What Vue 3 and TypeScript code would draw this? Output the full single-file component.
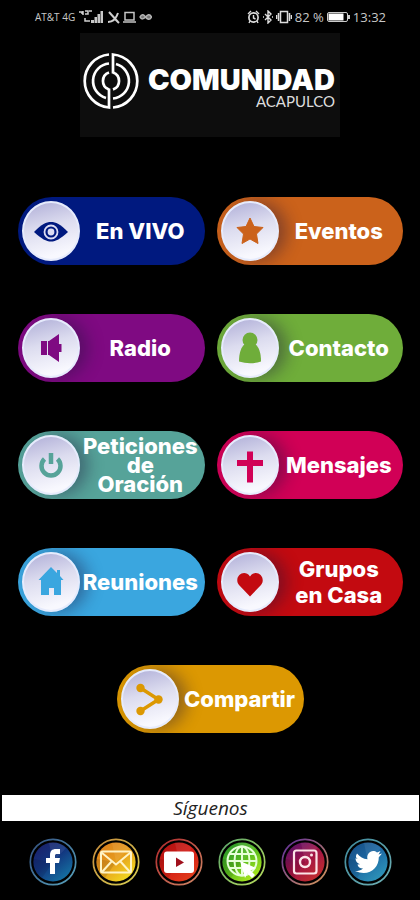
<script setup lang="ts">
interface MenuItem {
  id: string
  lines: string[]
  loose?: boolean
}

const items: MenuItem[] = [
  { id: 'vivo', lines: ['En VIVO'] },
  { id: 'eventos', lines: ['Eventos'] },
  { id: 'radio', lines: ['Radio'] },
  { id: 'contacto', lines: ['Contacto'] },
  { id: 'peticiones', lines: ['Peticiones', 'de', 'Oración'] },
  { id: 'mensajes', lines: ['Mensajes'] },
  { id: 'reuniones', lines: ['Reuniones'] },
  { id: 'grupos', lines: ['Grupos', 'en Casa'], loose: true },
  { id: 'compartir', lines: ['Compartir'] },
]

interface Social {
  id: string
  label: string
  ring: [string, string]
  fill: [string, string, string]
}

const socials: Social[] = [
  { id: 'facebook', label: 'Facebook', ring: ['#34507f', '#58a3bd'], fill: ['#1c1c66', '#12357f', '#1576a4'] },
  { id: 'correo', label: 'Correo', ring: ['#c58a3c', '#d8cf52'], fill: ['#d9791a', '#e69a1c', '#f2df22'] },
  { id: 'youtube', label: 'YouTube', ring: ['#b0262a', '#d08a68'], fill: ['#a81212', '#d31a14', '#e2401c'] },
  { id: 'web', label: 'Sitio web', ring: ['#5aa56c', '#b9dc5c'], fill: ['#1f8d2c', '#53b81e', '#b4ee1c'] },
  { id: 'instagram', label: 'Instagram', ring: ['#5a2a9c', '#d99a58'], fill: ['#4a1273', '#a01146', '#c4302c'] },
  { id: 'twitter', label: 'Twitter', ring: ['#3f8a9c', '#6fb0b4'], fill: ['#174a80', '#1c68a4', '#2f98ba'] },
]
</script>

<template>
  <div class="page">
    <header class="status">
      <div class="status-group">
        <span class="carrier">AT&amp;T 4G</span>
        <svg class="signal" viewBox="0 0 26 14" aria-hidden="true">
          <path d="M1 2h3v2M5 1v4M7 1h3v3H7M11 1h3M7 8v3h5" fill="none" stroke="#d0d0d0" stroke-width="1.5" />
          <path d="M13 10h3v3h-3zM16.500 7h2.500v6h-2.500zM19.500 4h2.500v9h-2.500zM22.500 1h2.500v12h-2.500z" fill="#c8c8c8" />
        </svg>
        <svg class="icon" viewBox="0 0 13 14" aria-hidden="true">
          <path d="M1 12c4 0 8-3 10-9M2 2l9 10M8 9l4 4" fill="none" stroke="#d0d0d0" stroke-width="2" />
        </svg>
        <svg class="icon" viewBox="0 0 13 14" aria-hidden="true">
          <path d="M2 2.500h9v7.500h-9zM0 12h13" fill="none" stroke="#c4c4c4" stroke-width="1.5" />
        </svg>
        <svg class="icon" viewBox="0 0 13 14" aria-hidden="true">
          <path d="M1 7c2-4 4-2 5.500 0s4 4 6 0c-2-4-4-2-6 0s-4 3-5.500 0z" fill="#777" stroke="#b4b4b4" stroke-width="1.500" />
        </svg>
      </div>
      <div class="status-group">
        <svg class="icon" viewBox="0 0 13 14" aria-hidden="true">
          <circle cx="6.500" cy="7.500" r="4.600" fill="none" stroke="#ddd" stroke-width="1.700" />
          <path d="M1 4l3-3M12 4L9 1M6.500 5v3l2 1M3 11l-1 2M10 11l1 2" fill="none" stroke="#ddd" stroke-width="1.400" />
        </svg>
        <svg class="bluetooth" viewBox="0 0 10 14" aria-hidden="true">
          <path d="M2 4l6 6-3 3V1l3 3-6 6M0 7h1M9 7h1" fill="none" stroke="#ddd" stroke-width="1.400" />
        </svg>
        <svg class="vibrate" viewBox="0 0 16 14" aria-hidden="true">
          <path d="M4.500 1.500h7v11h-7zM2.500 3v8M13.500 3v8M.5 5v4M15.500 5v4" fill="none" stroke="#ddd" stroke-width="1.500" />
        </svg>
        <span class="clock">82 %</span>
        <svg class="battery" viewBox="0 0 23 12" aria-hidden="true">
          <rect x=".5" y="1.500" width="20" height="9" rx="1.500" fill="none" stroke="#ccc" />
          <path d="M1.500 2.500h15v7h-15z" fill="#fff" />
          <path d="M21 4h2v4h-2z" fill="#ccc" />
        </svg>
        <span class="clock">13:32</span>
      </div>
    </header>

    <div class="brand">
      <svg class="brand-mark" viewBox="-29 -29 58 58" aria-hidden="true">
        <g fill="none" stroke="#fff" stroke-width="2.700">
          <path d="M-2-26.500A26.600 26.600 0 0 0-2 26.500V7.500" />
          <path d="M2 26.500A26.600 26.600 0 0 0 2-26.500V-7.500" />
          <path d="M-2-17.500A17.600 17.600 0 0 0-5 17" />
          <path d="M5-17A17.600 17.600 0 0 1 2 17.500" />
          <path d="M-2-8.500A9 9 0 0 0-2 8.500" />
          <path d="M2 8.500A9 9 0 0 0 2-8.500" />
        </g>
      </svg>
      <div class="brand-text">
        <h1 class="brand-name">COMUNIDAD</h1>
        <span class="brand-place">ACAPULCO</span>
      </div>
    </div>

    <nav class="menu">
      <button v-for="item in items" :key="item.id" type="button" class="pill" :class="item.id">
        <span class="knob">
          <svg class="knob-icon" viewBox="-27 -28 54 56" aria-hidden="true">
            <template v-if="item.id === 'vivo'">
              <path d="M-17 1C-9-7-5-9 0-9S9-7 17 1C9 8 5 10.500 0 10.500S-9 8-17 1z" />
              <circle cy="1" r="6.500" fill="none" stroke="#dcdcf2" stroke-width="1.800" />
              <circle cy="1" r="3.400" fill="#dcdcf2" />
            </template>
            <path v-else-if="item.id === 'eventos'" stroke-width="1" stroke="currentColor" stroke-linejoin="round" d="M0-13L4-4.500 13-3.500 6.500 3 8 12.500 0 8-8 12.500-6.500 3-13-3.500-4-4.500z" />
            <template v-else-if="item.id === 'radio'">
              <path d="M-10-7h6V7h-6zM-3-7h1L8-14V14L-2 7h-1z" />
              <path d="M8-4h2.500V4H8z" />
            </template>
            <template v-else-if="item.id === 'contacto'">
              <circle cy="-8" r="7.500" />
              <path d="M-5-4C-9-1-11 5-11 13.500Q0 17 11 13.500C11 5 9-1 5-4z" />
            </template>
            <path v-else-if="item.id === 'peticiones'" d="M-6.500-6A9.500 9.500 0 1 0 6.500-6M0-12V-1" fill="none" stroke="currentColor" stroke-width="4.500" />
            <path v-else-if="item.id === 'mensajes'" d="M-3-13.500h6v8.500h10V1H3v16.500h-6V1h-10v-6h10z" />
            <path v-else-if="item.id === 'reuniones'" d="M0-15L6-9v-3h3v6l3.500 4H10v15H3V6h-5v7h-8V-2h-2.500z" />
            <path v-else-if="item.id === 'grupos'" d="M0 14.500L-11 3C-17-5-6-14 0-5.500 6-14 17-5 11 3z" />
            <template v-else>
              <path d="M-9.500-11L8.500 .5-9.500 12" fill="none" stroke="currentColor" stroke-width="3.500" />
              <circle cx="-9.500" cy="-11" r="4.200" />
              <circle cx="8.500" cy=".5" r="4.200" />
              <circle cx="-9.500" cy="12" r="4.200" />
            </template>
          </svg>
        </span>
        <span class="label" :class="{ loose: item.loose }">
          <span v-for="line in item.lines" :key="line">{{ line }}</span>
        </span>
      </button>
    </nav>

    <footer class="footer">
      <h2 class="follow">Síguenos</h2>
      <div class="socials">
        <a v-for="s in socials" :key="s.id" class="social" href="#" :aria-label="s.label">
          <svg viewBox="-24 -24 48 48" aria-hidden="true">
            <defs>
              <linearGradient :id="'ring-' + s.id" x1="0" y1="0" x2="1" y2="1">
                <stop offset="0" :stop-color="s.ring[0]" />
                <stop offset="1" :stop-color="s.ring[1]" />
              </linearGradient>
              <linearGradient :id="'fill-' + s.id" x1="0" y1="0" x2=".8" y2="1">
                <stop offset="0" :stop-color="s.fill[0]" />
                <stop offset=".5" :stop-color="s.fill[1]" />
                <stop offset="1" :stop-color="s.fill[2]" />
              </linearGradient>
            </defs>
            <circle r="22.700" fill="#000" :stroke="`url(#ring-${s.id})`" stroke-width="1.700" />
            <circle r="19.600" :fill="`url(#fill-${s.id})`" />
            <path d="M0 0L-4-19A19.500 19.500 0 0 1 13-14z" fill="#fff" opacity=".08" />
            <path d="M0 0L-19-3A19.500 19.500 0 0 0-11 16z" fill="#000" opacity=".1" />
            <path v-if="s.id === 'facebook'" fill="#fff" d="M-3 12V1h-4v-5h4v-3c0-4 2-6 6-6h4v5H4C2.500-8 2-7.500 2-6v2h5L6 1H2v11z" />
            <g v-else-if="s.id === 'correo'" fill="none" stroke="#fff3c4" stroke-width="2">
              <rect x="-15" y="-10.500" width="30" height="21" rx="1.500" />
              <path d="M-14.500-9.500L0 2.500 14.500-9.500M-14 10L-4-1M14 10L4-1" />
            </g>
            <template v-else-if="s.id === 'youtube'">
              <rect x="-15" y="-10.500" width="30" height="21.500" rx="3" fill="#fff" />
              <path d="M-3-4.500L5 .5-3 5z" fill="#a0101c" />
            </template>
            <template v-else-if="s.id === 'web'">
              <g fill="none" stroke="#e6ffd8" stroke-width="2">
                <circle cy="-1" r="14.500" />
                <ellipse cy="-1" rx="7.500" ry="14.500" />
                <path d="M0-15.500v29M-14.500-1h29M-12.500-8h25M-12.500 6h25" />
              </g>
              <path d="M-2-1L14 6 8.500 8.500 13 13 10 16 5.500 11.500 3 16z" fill="#fff" />
            </template>
            <template v-else-if="s.id === 'instagram'">
              <g fill="none" stroke="#fbe4e8">
                <rect x="-11" y="-11.500" width="22.500" height="23" rx="2.500" stroke-width="2.200" />
                <circle r="5" stroke-width="2.400" />
              </g>
              <circle cx="6.500" cy="-7" r="1.500" fill="#fbe4e8" />
            </template>
            <path v-else fill="#fff" d="M-11-8.500C-8-5-5-3-.5-2.700-2-8.500 4-13.500 9-9.500l3.500-1.500-2 3.500L14-8.500l-3.200 3.700C11 6 1 15-13 9c3 0 6-.6 8-2.500-3 0-5-1.500-5.500-4l2.500-.2c-3-1-4.500-3-4.500-6l2.300.8C-12.500-4-12.500-6-11-8.500z" />
          </svg>
        </a>
      </div>
    </footer>
  </div>
</template>

<style>
body {
  margin: 0;
  background: #000;
}
</style>

<style scoped>
.page {
  display: flex;
  flex-direction: column;
  min-height: 100vh;
  box-sizing: border-box;
  background: #000;
  color: #fff;
  font-family: Inter, "Liberation Sans", sans-serif;
}

.status {
  display: flex;
  align-items: center;
  justify-content: space-between;
  height: 33px;
  padding: 0 34px 0 35px;
  color: #c8c8c8;
  font-family: "Open Sans", "Noto Sans", sans-serif;
}

.status-group {
  display: flex;
  align-items: center;
  gap: 3px;
}

.carrier {
  font-size: 10px;
  line-height: 14px;
}

.clock {
  font-size: 13px;
  line-height: 16px;
}

.signal {
  width: 26px;
  height: 14px;
}

.icon {
  width: 13px;
  height: 14px;
}

.bluetooth {
  width: 10px;
  height: 14px;
}

.vibrate {
  width: 16px;
  height: 14px;
}

.battery {
  width: 23px;
  height: 12px;
}

.brand {
  display: flex;
  align-items: center;
  align-self: center;
  gap: 8px;
  box-sizing: border-box;
  height: 104px;
  padding: 0 5px 8px 2px;
  background: #0d0d0d;
}

.brand-mark {
  width: 58px;
  height: 58px;
}

.brand-text {
  display: flex;
  flex-direction: column;
  align-items: flex-end;
  padding-top: 12px;
}

.brand-name {
  margin: 0;
  font-size: 29px;
  line-height: 28px;
  font-weight: 900;
}

.brand-place {
  font-family: Lato, sans-serif;
  font-size: 15px;
  line-height: 14px;
  color: #ddd;
}

.menu {
  display: grid;
  grid-template-columns: 1fr 1fr;
  gap: 49px 12px;
  padding: 60px 17px 62px 18px;
}

.pill {
  display: flex;
  align-items: center;
  box-sizing: border-box;
  height: 68px;
  padding: 0 4px;
  border: 0;
  border-radius: 34px;
  overflow: hidden;
  color: #fff;
  font-family: inherit;
  cursor: pointer;
  background: var(--tone);
}

.pill:last-child {
  grid-column: 1 / -1;
  justify-self: center;
  width: calc(50% - 6px);
}

.vivo { --tone: #00197f; }
.eventos { --tone: #cb621b; }
.radio { --tone: #7f0a82; }
.contacto { --tone: #6fad3a; }
.peticiones { --tone: #56a399; }
.mensajes { --tone: #d10056; }
.reuniones { --tone: #3aa6df; }
.grupos { --tone: #c30a10; }
.compartir { --tone: #dc9802; }

.knob {
  flex: none;
  box-sizing: border-box;
  width: 58px;
  height: 60px;
  border: 2px solid #e6ebfc;
  border-radius: 50%;
  background: linear-gradient(165deg, #b8b7dc 8%, #dcdcef 42%, #f8f8fe 85%);
  box-shadow: 8px 0 16px rgba(30, 20, 60, 0.4);
  color: var(--tone);
}

.vivo .knob {
  box-shadow: none;
}

.knob-icon {
  display: block;
  width: 54px;
  height: 56px;
  fill: currentColor;
}

.label {
  display: flex;
  flex: 1;
  flex-direction: column;
  align-items: center;
  min-width: 0;
  font-size: 22px;
  line-height: 19px;
  font-weight: 800;
  white-space: nowrap;
}

.label.loose {
  line-height: 26px;
}

.follow {
  margin: 0 1px 0 2px;
  background: #fff;
  color: #222;
  font-family: "Open Sans", "Noto Sans", sans-serif;
  font-size: 19px;
  line-height: 26px;
  font-style: italic;
  font-weight: 400;
  text-align: center;
}

.socials {
  display: flex;
  justify-content: center;
  gap: 15px;
  padding: 17px 0 14px;
}

.social {
  display: block;
  width: 48px;
  height: 48px;
}

.social svg {
  display: block;
  width: 48px;
  height: 48px;
}
</style>
